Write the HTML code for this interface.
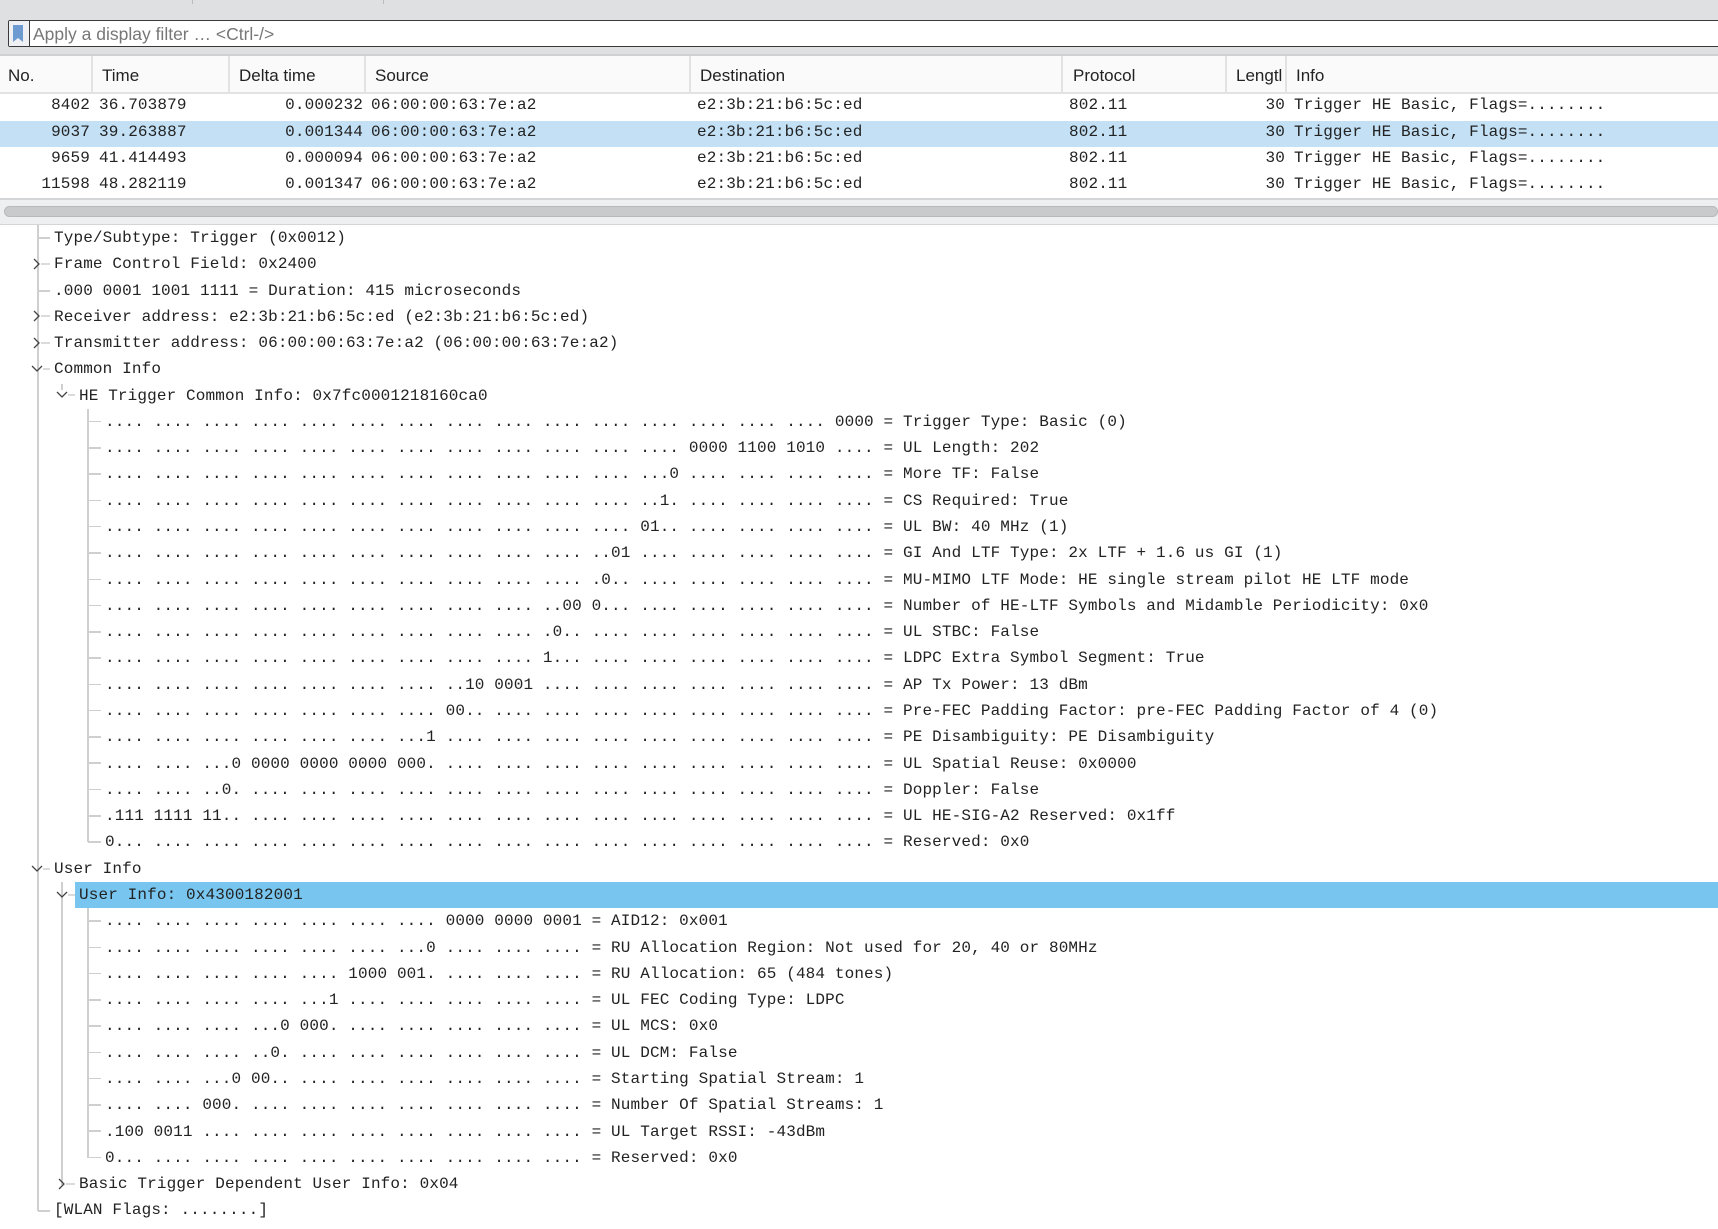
<!DOCTYPE html>
<html><head><meta charset="utf-8">
<style>
*{margin:0;padding:0;box-sizing:border-box}
body{width:1718px;height:1229px;background:#fff;position:relative;overflow:hidden;font-family:"Liberation Sans",sans-serif}
.abs{position:absolute}
.mono{font-family:"Liberation Mono",monospace;font-size:16px;color:#222;white-space:pre;letter-spacing:0.13px}
.hdr{position:absolute;top:56px;height:38px;line-height:40px;font-size:17px;color:#222;border-right:2px solid #e2e2e2}
.pr{position:absolute;left:0;width:1718px;height:26.3px;line-height:22px}
.c{position:absolute;top:0}
.tr{position:absolute;height:26.28px;line-height:26.28px}
.vl{position:absolute;width:2px;background:#cfcfcf}
.hl{position:absolute;height:1.5px;background:#cfcfcf}
</style></head><body>
<div class="abs" style="left:0;top:0;width:1718px;height:56px;background:#dfe0e2"></div>
<div class="abs" style="left:192px;top:0;width:1px;height:4px;background:#bbb"></div>
<div class="abs" style="left:383px;top:0;width:1px;height:4px;background:#bbb"></div>
<div class="abs" style="left:0;top:54px;width:1718px;height:2px;background:#cfd0d2"></div>
<div class="abs" style="left:8px;top:20px;width:1712px;height:27px;background:#fff;border:1.5px solid #3a3a3a;border-radius:2px"></div>
<div class="abs" style="left:9px;top:21px;width:21px;height:25px;background:#eef0f3;border-right:1.5px solid #3a3a3a"></div>
<svg class="abs" style="left:12px;top:25px" width="12" height="18"><path d="M1 0H11V17L6 13L1 17Z" fill="#6d9ad0"/></svg>
<div class="abs" style="left:33px;top:21px;height:25px;line-height:26px;font-size:17.5px;color:#777">Apply a display filter … &lt;Ctrl-/&gt;</div>
<div class="abs" style="left:0;top:56px;width:1718px;height:38px;background:#fafafa;border-bottom:2px solid #e2e2e2"></div>
<div class="hdr" style="left:0;width:93px;padding-left:8px">No.</div>
<div class="hdr" style="left:93px;width:137px;padding-left:9px">Time</div>
<div class="hdr" style="left:230px;width:136px;padding-left:9px">Delta time</div>
<div class="hdr" style="left:366px;width:325px;padding-left:9px">Source</div>
<div class="hdr" style="left:691px;width:372px;padding-left:9px">Destination</div>
<div class="hdr" style="left:1063px;width:164px;padding-left:10px">Protocol</div>
<div class="hdr" style="left:1227px;width:60px;padding-left:9px;overflow:hidden">Lengtl</div>
<div class="hdr" style="left:1287px;width:431px;padding-left:9px;border-right:none">Info</div>
<div class="pr mono" style="top:94px"><span class="c" style="right:1628px">8402</span><span class="c" style="left:99px">36.703879</span><span class="c" style="right:1355px">0.000232</span><span class="c" style="left:371px">06:00:00:63:7e:a2</span><span class="c" style="left:697px">e2:3b:21:b6:5c:ed</span><span class="c" style="left:1069px">802.11</span><span class="c" style="right:433px">30</span><span class="c" style="left:1294px">Trigger HE Basic, Flags=........</span></div>
<div class="pr mono" style="top:120.5px;background:#c3e0f5"><span class="c" style="right:1628px">9037</span><span class="c" style="left:99px">39.263887</span><span class="c" style="right:1355px">0.001344</span><span class="c" style="left:371px">06:00:00:63:7e:a2</span><span class="c" style="left:697px">e2:3b:21:b6:5c:ed</span><span class="c" style="left:1069px">802.11</span><span class="c" style="right:433px">30</span><span class="c" style="left:1294px">Trigger HE Basic, Flags=........</span></div>
<div class="pr mono" style="top:147px"><span class="c" style="right:1628px">9659</span><span class="c" style="left:99px">41.414493</span><span class="c" style="right:1355px">0.000094</span><span class="c" style="left:371px">06:00:00:63:7e:a2</span><span class="c" style="left:697px">e2:3b:21:b6:5c:ed</span><span class="c" style="left:1069px">802.11</span><span class="c" style="right:433px">30</span><span class="c" style="left:1294px">Trigger HE Basic, Flags=........</span></div>
<div class="pr mono" style="top:173px"><span class="c" style="right:1628px">11598</span><span class="c" style="left:99px">48.282119</span><span class="c" style="right:1355px">0.001347</span><span class="c" style="left:371px">06:00:00:63:7e:a2</span><span class="c" style="left:697px">e2:3b:21:b6:5c:ed</span><span class="c" style="left:1069px">802.11</span><span class="c" style="right:433px">30</span><span class="c" style="left:1294px">Trigger HE Basic, Flags=........</span></div>
<div class="abs" style="left:0;top:198px;width:1718px;height:27px;background:#eeeff0;border-top:2px solid #d4d5d6;border-bottom:1.5px solid #d4d5d6"></div>
<div class="abs" style="left:4px;top:206px;width:1714px;height:11px;background:#c9cacb;border:1px solid #b8b9ba;border-radius:6px"></div>

<div class="vl" style="left:37px;top:225px;height:986px"></div>
<div class="vl" style="left:61px;top:384px;height:6px"></div>
<div class="vl" style="left:87px;top:409px;height:433px"></div>
<div class="vl" style="left:61px;top:882px;height:303px"></div>
<div class="vl" style="left:87px;top:908px;height:250px"></div>

<div class="abs" style="left:75px;top:882px;width:1643px;height:26.3px;background:#78c6ef"></div>

<div class="hl" style="left:38px;top:237px;width:12px"></div>
<div class="tr mono" style="left:54px;top:225px">Type/Subtype: Trigger (0x0012)</div>
<svg class="abs" style="left:32px;top:257px" width="20" height="14"><path d="M2 2L7 7L2 12" fill="none" stroke="#444" stroke-width="1.3"/><path d="M9 7H18" stroke="#cfcfcf" stroke-width="1.5"/></svg>
<div class="tr mono" style="left:54px;top:251.3px">Frame Control Field: 0x2400</div>
<div class="hl" style="left:38px;top:290px;width:12px"></div>
<div class="tr mono" style="left:54px;top:277.6px">.000 0001 1001 1111 = Duration: 415 microseconds</div>
<svg class="abs" style="left:32px;top:309px" width="20" height="14"><path d="M2 2L7 7L2 12" fill="none" stroke="#444" stroke-width="1.3"/><path d="M9 7H18" stroke="#cfcfcf" stroke-width="1.5"/></svg>
<div class="tr mono" style="left:54px;top:303.8px">Receiver address: e2:3b:21:b6:5c:ed (e2:3b:21:b6:5c:ed)</div>
<svg class="abs" style="left:32px;top:336px" width="20" height="14"><path d="M2 2L7 7L2 12" fill="none" stroke="#444" stroke-width="1.3"/><path d="M9 7H18" stroke="#cfcfcf" stroke-width="1.5"/></svg>
<div class="tr mono" style="left:54px;top:330.1px">Transmitter address: 06:00:00:63:7e:a2 (06:00:00:63:7e:a2)</div>
<svg class="abs" style="left:30px;top:362px" width="22" height="14"><path d="M2 4L7 9L12 4" fill="none" stroke="#444" stroke-width="1.3"/><path d="M13 7H20" stroke="#cfcfcf" stroke-width="1.5"/></svg>
<div class="tr mono" style="left:54px;top:356.4px">Common Info</div>
<svg class="abs" style="left:55px;top:388px" width="22" height="14"><path d="M2 4L7 9L12 4" fill="none" stroke="#444" stroke-width="1.3"/><path d="M13 7H20" stroke="#cfcfcf" stroke-width="1.5"/></svg>
<div class="tr mono" style="left:79px;top:382.7px">HE Trigger Common Info: 0x7fc0001218160ca0</div>

<div class="abs" style="left:0;top:408.9px">
<div class="hl" style="left:88px;top:12px;width:13px"></div><div class="hl" style="left:88px;top:38.3px;width:13px"></div><div class="hl" style="left:88px;top:64.6px;width:13px"></div><div class="hl" style="left:88px;top:90.8px;width:13px"></div><div class="hl" style="left:88px;top:117.1px;width:13px"></div><div class="hl" style="left:88px;top:143.4px;width:13px"></div><div class="hl" style="left:88px;top:169.7px;width:13px"></div><div class="hl" style="left:88px;top:196px;width:13px"></div><div class="hl" style="left:88px;top:222.2px;width:13px"></div><div class="hl" style="left:88px;top:248.5px;width:13px"></div><div class="hl" style="left:88px;top:274.8px;width:13px"></div><div class="hl" style="left:88px;top:301.1px;width:13px"></div><div class="hl" style="left:88px;top:327.4px;width:13px"></div><div class="hl" style="left:88px;top:353.6px;width:13px"></div><div class="hl" style="left:88px;top:379.9px;width:13px"></div><div class="hl" style="left:88px;top:406.2px;width:13px"></div><div class="hl" style="left:88px;top:432.5px;width:13px"></div>
<div class="mono" style="position:absolute;left:105px;top:0;line-height:26.28px">.... .... .... .... .... .... .... .... .... .... .... .... .... .... .... 0000 = Trigger Type: Basic (0)
.... .... .... .... .... .... .... .... .... .... .... .... 0000 1100 1010 .... = UL Length: 202
.... .... .... .... .... .... .... .... .... .... .... ...0 .... .... .... .... = More TF: False
.... .... .... .... .... .... .... .... .... .... .... ..1. .... .... .... .... = CS Required: True
.... .... .... .... .... .... .... .... .... .... .... 01.. .... .... .... .... = UL BW: 40 MHz (1)
.... .... .... .... .... .... .... .... .... .... ..01 .... .... .... .... .... = GI And LTF Type: 2x LTF + 1.6 us GI (1)
.... .... .... .... .... .... .... .... .... .... .0.. .... .... .... .... .... = MU-MIMO LTF Mode: HE single stream pilot HE LTF mode
.... .... .... .... .... .... .... .... .... ..00 0... .... .... .... .... .... = Number of HE-LTF Symbols and Midamble Periodicity: 0x0
.... .... .... .... .... .... .... .... .... .0.. .... .... .... .... .... .... = UL STBC: False
.... .... .... .... .... .... .... .... .... 1... .... .... .... .... .... .... = LDPC Extra Symbol Segment: True
.... .... .... .... .... .... .... ..10 0001 .... .... .... .... .... .... .... = AP Tx Power: 13 dBm
.... .... .... .... .... .... .... 00.. .... .... .... .... .... .... .... .... = Pre-FEC Padding Factor: pre-FEC Padding Factor of 4 (0)
.... .... .... .... .... .... ...1 .... .... .... .... .... .... .... .... .... = PE Disambiguity: PE Disambiguity
.... .... ...0 0000 0000 0000 000. .... .... .... .... .... .... .... .... .... = UL Spatial Reuse: 0x0000
.... .... ..0. .... .... .... .... .... .... .... .... .... .... .... .... .... = Doppler: False
.111 1111 11.. .... .... .... .... .... .... .... .... .... .... .... .... .... = UL HE-SIG-A2 Reserved: 0x1ff
0... .... .... .... .... .... .... .... .... .... .... .... .... .... .... .... = Reserved: 0x0</div>
</div>

<svg class="abs" style="left:30px;top:862px" width="22" height="14"><path d="M2 4L7 9L12 4" fill="none" stroke="#444" stroke-width="1.3"/><path d="M13 7H20" stroke="#cfcfcf" stroke-width="1.5"/></svg>
<div class="tr mono" style="left:54px;top:855.7px">User Info</div>
<svg class="abs" style="left:55px;top:888px" width="22" height="14"><path d="M2 4L7 9L12 4" fill="none" stroke="#444" stroke-width="1.3"/><path d="M13 7H20" stroke="#cfcfcf" stroke-width="1.5"/></svg>
<div class="tr mono" style="left:79px;top:882px">User Info: 0x4300182001</div>

<div class="abs" style="left:0;top:908.3px">
<div class="hl" style="left:88px;top:12px;width:13px"></div><div class="hl" style="left:88px;top:38.3px;width:13px"></div><div class="hl" style="left:88px;top:64.6px;width:13px"></div><div class="hl" style="left:88px;top:90.8px;width:13px"></div><div class="hl" style="left:88px;top:117.1px;width:13px"></div><div class="hl" style="left:88px;top:143.4px;width:13px"></div><div class="hl" style="left:88px;top:169.7px;width:13px"></div><div class="hl" style="left:88px;top:196px;width:13px"></div><div class="hl" style="left:88px;top:222.2px;width:13px"></div><div class="hl" style="left:88px;top:248.5px;width:13px"></div>
<div class="mono" style="position:absolute;left:105px;top:0;line-height:26.28px">.... .... .... .... .... .... .... 0000 0000 0001 = AID12: 0x001
.... .... .... .... .... .... ...0 .... .... .... = RU Allocation Region: Not used for 20, 40 or 80MHz
.... .... .... .... .... 1000 001. .... .... .... = RU Allocation: 65 (484 tones)
.... .... .... .... ...1 .... .... .... .... .... = UL FEC Coding Type: LDPC
.... .... .... ...0 000. .... .... .... .... .... = UL MCS: 0x0
.... .... .... ..0. .... .... .... .... .... .... = UL DCM: False
.... .... ...0 00.. .... .... .... .... .... .... = Starting Spatial Stream: 1
.... .... 000. .... .... .... .... .... .... .... = Number Of Spatial Streams: 1
.100 0011 .... .... .... .... .... .... .... .... = UL Target RSSI: -43dBm
0... .... .... .... .... .... .... .... .... .... = Reserved: 0x0</div>
</div>

<svg class="abs" style="left:57px;top:1177px" width="20" height="14"><path d="M2 2L7 7L2 12" fill="none" stroke="#444" stroke-width="1.3"/><path d="M9 7H18" stroke="#cfcfcf" stroke-width="1.5"/></svg>
<div class="tr mono" style="left:79px;top:1171.1px">Basic Trigger Dependent User Info: 0x04</div>
<div class="hl" style="left:38px;top:1210px;width:12px"></div>
<div class="tr mono" style="left:54px;top:1197.4px">[WLAN Flags: ........]</div>
</body></html>
